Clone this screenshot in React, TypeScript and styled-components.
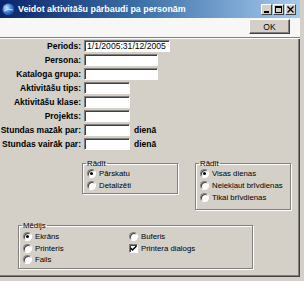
import React from "react";
import styled, { createGlobalStyle } from "styled-components";

const Global = createGlobalStyle`
  html, body { margin: 0; padding: 0; background: #d4d0c8; }
  body { font-family: "Liberation Sans", Arial, sans-serif; }
  * { box-sizing: border-box; }
`;

const Window = styled.div`
  width: 304px;
  height: 281px;
  display: flex;
  flex-direction: column;
  background: #d4d0c8;
  border-right: 4px solid #d4d0c8;
  border-bottom: 4px solid #d4d0c8;
  box-shadow: inset -1px -1px 0 #404040, inset -2px -2px 0 #808080;
  overflow: hidden;
`;

const TitleBar = styled.div`
  height: 18px;
  flex: none;
  display: flex;
  align-items: center;
  padding: 0 2px 0 2px;
  background: linear-gradient(to right, #0a246a 0%, #3a6ea5 45%, #a6caf0 100%);
`;

const TitleText = styled.span`
  margin-left: 3px;
  flex: 1;
  color: #ffffff;
  font-size: 8.9px;
  font-weight: bold;
  white-space: nowrap;
`;

const CaptionButtons = styled.div`
  display: flex;
  gap: 1px;
  margin-right: 2px;
`;

const CaptionButton = styled.div`
  width: 11px;
  height: 11px;
  background: #d4d0c8;
  border: 1px solid;
  border-color: #ffffff #404040 #404040 #ffffff;
  display: flex;
  align-items: center;
  justify-content: center;
`;

const Toolbar = styled.div`
  height: 20px;
  flex: none;
  display: flex;
  justify-content: flex-end;
  align-items: flex-start;
  padding: 1px 10px 0 0;
  background: #f7f7f5;
  border-bottom: 1px solid #808080;
  box-shadow: 0 1px 0 #ffffff;
`;

const Button = styled.button`
  width: 41px;
  height: 15px;
  padding: 0;
  background: #d4d0c8;
  border: 1px solid;
  border-color: #ffffff #404040 #404040 #ffffff;
  box-shadow: inset -1px -1px 0 #808080;
  font-family: "Liberation Sans", Arial, sans-serif;
  font-size: 8.5px;
  color: #000;
`;

const Body = styled.div`
  flex: 1;
  padding: 2px 0 0 0;
  display: flex;
  flex-direction: column;
`;

const Form = styled.div`
  display: grid;
  grid-template-columns: 81px auto;
  column-gap: 3px;
  row-gap: 2px;
  align-items: center;
`;

const Label = styled.div`
  text-align: right;
  font-size: 8.5px;
  font-weight: bold;
  color: #000;
  white-space: nowrap;
`;

const Field = styled.div`
  display: flex;
  align-items: center;
  gap: 4px;
`;

const Input = styled.div<{ $w: number }>`
  width: ${(p) => p.$w}px;
  height: 12px;
  background: #ffffff;
  border: 1px solid;
  border-color: #808080 #ffffff #ffffff #808080;
  box-shadow: inset 1px 1px 0 #404040;
  font-size: 8.6px;
  line-height: 10px;
  padding-left: 2px;
  white-space: nowrap;
  overflow: hidden;
`;

const Unit = styled.span`
  font-size: 8.5px;
  font-weight: bold;
`;

const GroupRow = styled.div`
  display: flex;
  align-items: flex-start;
  margin-top: 9px;
  padding-left: 82px;
  gap: 17px;
`;

const Group = styled.fieldset<{ $w: number; $h: number }>`
  width: ${(p) => p.$w}px;
  height: ${(p) => p.$h}px;
  margin: 0;
  padding: 0 0 0 4px;
  border: 1px solid #808080;
  box-shadow: 1px 1px 0 #ffffff, inset 1px 1px 0 #ffffff;
  display: flex;
  flex-direction: column;
  gap: 1px;
`;

const Legend = styled.legend`
  font-size: 7.8px;
  padding: 0 1px;
  margin-left: -1px;
  line-height: 9px;
  color: #000;
`;

const MediaGroup = styled(Group)`
  margin: 11px 0 0 18px;
  display: grid;
  grid-template-columns: 105px auto;
  grid-auto-flow: column;
  grid-template-rows: repeat(3, 11px);
  row-gap: 0.5px;
  align-content: start;
  padding-top: 1px;
`;

const Option = styled.div`
  display: flex;
  align-items: center;
  height: 11px;
  gap: 3px;
  font-size: 7.8px;
  color: #000;
  white-space: nowrap;
`;

const RadioDot = styled.span<{ $on?: boolean }>`
  width: 9px;
  height: 9px;
  flex: none;
  border-radius: 50%;
  background: #fff;
  border: 1px solid;
  border-color: #808080 #ffffff #ffffff #808080;
  box-shadow: inset 1px 1px 0 #404040;
  display: flex;
  align-items: center;
  justify-content: center;
  &::after {
    content: "";
    width: 3px;
    height: 3px;
    border-radius: 50%;
    background: ${(p) => (p.$on ? "#000" : "transparent")};
  }
`;

const CheckBox = styled.span`
  width: 9px;
  height: 9px;
  flex: none;
  background: #fff;
  border: 1px solid;
  border-color: #808080 #ffffff #ffffff #808080;
  box-shadow: inset 1px 1px 0 #404040;
  display: flex;
  align-items: center;
  justify-content: center;
`;

const Radio = ({ on, children }: { on?: boolean; children: React.ReactNode }) => (
  <Option>
    <RadioDot $on={on} />
    <span>{children}</span>
  </Option>
);

const rows: { label: string; w: number; value?: string; unit?: string }[] = [
  { label: "Periods:", w: 86, value: "1/1/2005:31/12/2005" },
  { label: "Persona:", w: 74 },
  { label: "Kataloga grupa:", w: 74 },
  { label: "Aktivitāšu tips:", w: 46 },
  { label: "Aktivitāšu klase:", w: 46 },
  { label: "Projekts:", w: 46 },
  { label: "Stundas mazāk par:", w: 46, unit: "dienā" },
  { label: "Stundas vairāk par:", w: 46, unit: "dienā" },
];

export default function App() {
  return (
    <>
      <Global />
      <Window>
        <TitleBar>
          <svg width="13" height="13" viewBox="0 0 13 13">
            <defs>
              <radialGradient id="g" cx="35%" cy="35%" r="70%">
                <stop offset="0%" stopColor="#cfe6ff" />
                <stop offset="55%" stopColor="#3d7fd6" />
                <stop offset="100%" stopColor="#0c3d8c" />
              </radialGradient>
            </defs>
            <circle cx="6.5" cy="6.5" r="6" fill="url(#g)" />
            <path d="M2 8 Q6 5 11 7" stroke="#ffffff" strokeWidth="1" fill="none" opacity="0.7" />
          </svg>
          <TitleText>Veidot aktivitāšu pārbaudi pa personām</TitleText>
          <CaptionButtons>
            <CaptionButton>
              <svg width="7" height="7" viewBox="0 0 7 7">
                <rect x="1" y="5" width="5" height="2" fill="#000" />
              </svg>
            </CaptionButton>
            <CaptionButton>
              <svg width="7" height="7" viewBox="0 0 7 7">
                <rect x="0.5" y="0.5" width="6" height="6" fill="none" stroke="#000" />
                <rect x="0" y="0" width="7" height="2" fill="#000" />
              </svg>
            </CaptionButton>
            <CaptionButton>
              <svg width="7" height="7" viewBox="0 0 7 7">
                <path d="M0.5 0.5 L6.5 6.5 M6.5 0.5 L0.5 6.5" stroke="#000" strokeWidth="1.4" />
              </svg>
            </CaptionButton>
          </CaptionButtons>
        </TitleBar>
        <Toolbar>
          <Button>OK</Button>
        </Toolbar>
        <Body>
          <Form>
            {rows.map((r) => (
              <React.Fragment key={r.label}>
                <Label>{r.label}</Label>
                <Field>
                  <Input $w={r.w}>{r.value}</Input>
                  {r.unit && <Unit>{r.unit}</Unit>}
                </Field>
              </React.Fragment>
            ))}
          </Form>
          <GroupRow>
            <Group $w={96} $h={35}>
              <Legend>Rādīt</Legend>
              <Radio on>Pārskatu</Radio>
              <Radio>Detalizēti</Radio>
            </Group>
            <Group $w={96} $h={51}>
              <Legend>Rādīt</Legend>
              <Radio on>Visas dienas</Radio>
              <Radio>Neiekļaut brīvdienas</Radio>
              <Radio>Tikai brīvdienas</Radio>
            </Group>
          </GroupRow>
          <MediaGroup $w={235} $h={48}>
            <Legend>Mēdijs</Legend>
            <Radio on>Ekrāns</Radio>
            <Radio>Printeris</Radio>
            <Radio>Fails</Radio>
            <Radio>Buferis</Radio>
            <Option>
              <CheckBox>
                <svg width="7" height="7" viewBox="0 0 7 7">
                  <path d="M0.5 3 L2.5 5 L6.5 1" stroke="#000" strokeWidth="1.5" fill="none" />
                </svg>
              </CheckBox>
              <span>Printera dialogs</span>
            </Option>
          </MediaGroup>
        </Body>
      </Window>
    </>
  );
}
